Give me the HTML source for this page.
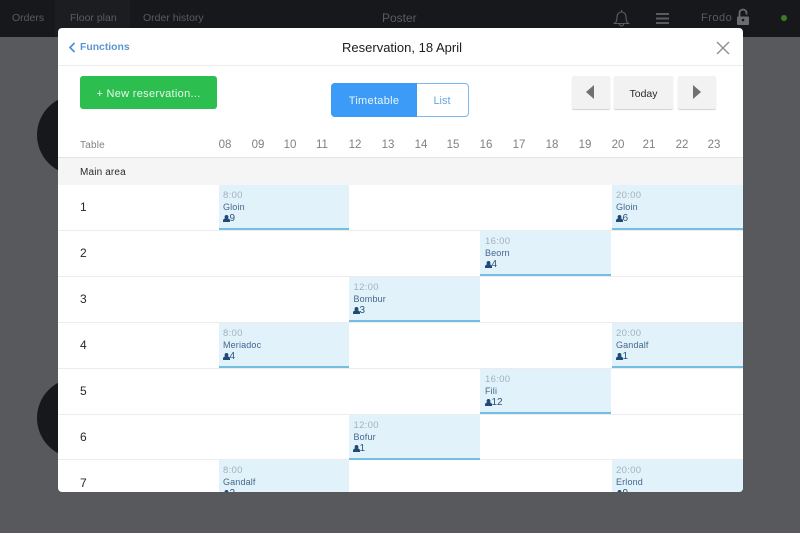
<!DOCTYPE html>
<html><head><meta charset="utf-8"><style>
*{box-sizing:border-box;margin:0;padding:0}
html,body{width:800px;height:533px;overflow:hidden;background:#58595d;font-family:"Liberation Sans",sans-serif}
.a{position:absolute;white-space:nowrap}
.top{left:0;top:0;width:800px;height:37px;background:#17181c}
.tt{color:#5a5b5f;font-size:10.5px;top:12px;line-height:13px}
.c{width:80px;height:80px;border-radius:50%;background:#17181c;left:37px}
.m{left:58px;top:28px;width:685px;height:464px;background:#fff;border-radius:4px;overflow:hidden}
.h{color:#808083;font-size:11.5px;line-height:13px;top:111px;width:30px;text-align:center}
.row{left:0;width:685px;height:1px;background:#ececee}
.n{left:22px;font-size:12px;color:#27282b;line-height:13px}
.e{height:45px;background:#e1f2fa;border-bottom:2px solid #74bde3}
.w1{width:130px}.w2{width:131px}
.e b{position:absolute;left:4px;font-weight:normal;white-space:nowrap}
.e .t{top:5px;color:#a3b1bd;font-size:9.5px;line-height:12px;letter-spacing:.3px}
.e .g{top:17px;color:#44678a;font-size:9px;line-height:11px;letter-spacing:.15px}
.e .p{top:28px;left:10.5px;color:#2c5478;font-size:10px;line-height:12px}
.e svg{position:absolute;left:4px;top:30px}
.btn{top:48px;height:33px;background:#f2f2f2;border-radius:2px;box-shadow:0 1px 1px #d0d0d0}
</style></head><body>
<div class="a top"></div>
<div class="a" style="left:55px;top:0;width:75px;height:37px;background:#1c1d21"></div>
<div class="a tt" style="left:12px">Orders</div>
<div class="a tt" style="left:70px">Floor plan</div>
<div class="a tt" style="left:143px">Order history</div>
<div class="a tt" style="left:382px;font-size:12px;top:12px">Poster</div>
<svg class="a" style="left:613px;top:9px" width="17" height="18" viewBox="0 0 17 18" fill="none" stroke="#5a5b5f" stroke-width="1.1"><path d="M1.500 14.500c2-1.500 2.500-3 2.500-6.500 0-3 2-5 4.500-5s4.500 2 4.500 5c0 3.500.5 5 2.500 6.500z"/><path d="M8.500 3V1M6.500 15c0 2.500 4 2.500 4 0"/></svg>
<svg class="a" style="left:656px;top:13px" width="13" height="11" fill="#5a5b5f"><rect y="0" width="13" height="2"/><rect y="4.500" width="13" height="2"/><rect y="9" width="13" height="2"/></svg>
<div class="a tt" style="left:701px;font-size:11px;top:12px;letter-spacing:.5px">Frodo</div>
<svg class="a" style="left:736px;top:8px" width="14" height="18"><path d="M3.500 9V5a3.500 3.500 0 0 1 7 0v1.500" fill="none" stroke="#6a6b6e" stroke-width="1.800"/><rect x="1" y="8.500" width="12" height="8.500" rx="1" fill="#6a6b6e"/><circle cx="7" cy="12" r="1.300" fill="#17181c"/></svg>
<div class="a" style="left:781px;top:15px;width:6px;height:6px;border-radius:50%;background:#3c7d22"></div>
<div class="a c" style="top:95px"></div>
<div class="a c" style="top:378px"></div>
<div class="a m">
<svg class="a" style="left:10px;top:14px" width="8" height="11" fill="none" stroke="#4a90d9" stroke-width="1.700"><path d="M6.500 1L2 5.500 6.500 10"/></svg>
<div class="a" style="left:22px;top:13px;font-size:10.400px;font-weight:bold;color:#5b95d3;line-height:13px">Functions</div>
<div class="a" style="left:0;width:688px;top:12px;text-align:center;font-size:13px;line-height:15px;color:#1d1d20">Reservation, 18 April</div>
<svg class="a" style="left:658px;top:13px" width="14" height="14" fill="none" stroke="#8e8e90" stroke-width="1.300"><path d="M1 1L13 13M13 1L1 13"/></svg>
<div class="a" style="left:0;top:37px;width:685px;height:1px;background:#ececee"></div>
<div class="a" style="left:22px;top:48px;width:137px;height:33px;background:#2cbf50;border-radius:3px;color:#e6f7ea;font-size:11px;line-height:36px;text-align:center;letter-spacing:.3px">+ New reservation...</div>
<div class="a" style="left:273px;top:55px;width:138px;height:34px;border:1px solid #7db8ee;border-radius:4px"></div>
<div class="a" style="left:273px;top:55px;width:86px;height:34px;background:#3c9bf6;border-radius:4px 0 0 4px;color:#eaf4fe;font-size:11px;line-height:36px;text-align:center;letter-spacing:.3px">Timetable</div>
<div class="a" style="left:359px;top:55px;width:50px;height:34px;color:#64a8e8;font-size:11px;line-height:36px;text-align:center">List</div>
<div class="a btn" style="left:514px;width:38px"></div>
<div class="a btn" style="left:556px;width:59px;color:#2a2a2c;font-size:10.500px;line-height:36px;text-align:center">Today</div>
<div class="a btn" style="left:620px;width:38px"></div>
<svg class="a" style="left:528px;top:57px" width="9" height="14" fill="#707072"><path d="M8 0v14L0 7z"/></svg>
<svg class="a" style="left:635px;top:57px" width="9" height="14" fill="#707072"><path d="M0 0v14l8-7z"/></svg>
<div class="a" style="left:22px;top:111px;font-size:10px;line-height:13px;color:#808083;letter-spacing:.2px">Table</div>
<div class="a h" style="left:152px">08</div><div class="a h" style="left:185px">09</div><div class="a h" style="left:217px">10</div><div class="a h" style="left:249px">11</div><div class="a h" style="left:282px">12</div><div class="a h" style="left:315px">13</div><div class="a h" style="left:348px">14</div><div class="a h" style="left:380px">15</div><div class="a h" style="left:413px">16</div><div class="a h" style="left:446px">17</div><div class="a h" style="left:479px">18</div><div class="a h" style="left:512px">19</div><div class="a h" style="left:545px">20</div><div class="a h" style="left:576px">21</div><div class="a h" style="left:609px">22</div><div class="a h" style="left:641px">23</div>
<div class="a" style="left:0;top:129px;width:685px;height:28px;background:#f5f5f5;border-top:1px solid #e4e4e6"></div>
<div class="a" style="left:22px;top:138px;font-size:10px;line-height:13px;color:#2a2a2c;letter-spacing:.15px">Main area</div>
<div class="a row" style="top:202px"></div><div class="a row" style="top:248px"></div><div class="a row" style="top:294px"></div><div class="a row" style="top:340px"></div><div class="a row" style="top:386px"></div><div class="a row" style="top:431px"></div>
<div class="a n" style="top:173px">1</div><div class="a n" style="top:219px">2</div><div class="a n" style="top:265px">3</div><div class="a n" style="top:311px">4</div><div class="a n" style="top:357px">5</div><div class="a n" style="top:403px">6</div><div class="a n" style="top:449px">7</div>

<div class="a e w1" style="left:161px;top:157px"><b class="t">8:00</b><b class="g">Gloin</b><svg width="7" height="7" fill="#1f4a73"><circle cx="3.500" cy="1.900" r="1.900"/><path d="M0 7V6c0-2.500 2-2.700 3.500-2.700S7 3.500 7 6v1z"/></svg><b class="p">9</b></div>
<div class="a e w2" style="left:554px;top:157px"><b class="t">20:00</b><b class="g">Gloin</b><svg width="7" height="7" fill="#1f4a73"><circle cx="3.500" cy="1.900" r="1.900"/><path d="M0 7V6c0-2.500 2-2.700 3.500-2.700S7 3.500 7 6v1z"/></svg><b class="p">6</b></div>
<div class="a e w2" style="left:422px;top:203px"><b class="t" style="left:5px">16:00</b><b class="g" style="left:5px">Beorn</b><svg width="7" height="7" fill="#1f4a73" style="left:5px"><circle cx="3.500" cy="1.900" r="1.900"/><path d="M0 7V6c0-2.500 2-2.700 3.500-2.700S7 3.500 7 6v1z"/></svg><b class="p" style="left:11.500px">4</b></div>
<div class="a e w2" style="left:291px;top:249px"><b class="t" style="left:4.500px">12:00</b><b class="g" style="left:4.500px">Bombur</b><svg width="7" height="7" fill="#1f4a73"><circle cx="3.500" cy="1.900" r="1.900"/><path d="M0 7V6c0-2.500 2-2.700 3.500-2.700S7 3.500 7 6v1z"/></svg><b class="p">3</b></div>
<div class="a e w1" style="left:161px;top:295px"><b class="t">8:00</b><b class="g">Meriadoc</b><svg width="7" height="7" fill="#1f4a73"><circle cx="3.500" cy="1.900" r="1.900"/><path d="M0 7V6c0-2.500 2-2.700 3.500-2.700S7 3.500 7 6v1z"/></svg><b class="p">4</b></div>
<div class="a e w2" style="left:554px;top:295px"><b class="t">20:00</b><b class="g">Gandalf</b><svg width="7" height="7" fill="#1f4a73"><circle cx="3.500" cy="1.900" r="1.900"/><path d="M0 7V6c0-2.500 2-2.700 3.500-2.700S7 3.500 7 6v1z"/></svg><b class="p">1</b></div>
<div class="a e w2" style="left:422px;top:341px"><b class="t" style="left:5px">16:00</b><b class="g" style="left:5px">Fili</b><svg width="7" height="7" fill="#1f4a73" style="left:5px"><circle cx="3.500" cy="1.900" r="1.900"/><path d="M0 7V6c0-2.500 2-2.700 3.500-2.700S7 3.500 7 6v1z"/></svg><b class="p" style="left:11.500px">12</b></div>
<div class="a e w2" style="left:291px;top:387px"><b class="t" style="left:4.500px">12:00</b><b class="g" style="left:4.500px">Bofur</b><svg width="7" height="7" fill="#1f4a73"><circle cx="3.500" cy="1.900" r="1.900"/><path d="M0 7V6c0-2.500 2-2.700 3.500-2.700S7 3.500 7 6v1z"/></svg><b class="p">1</b></div>
<div class="a e w1" style="left:161px;top:432px"><b class="t">8:00</b><b class="g">Gandalf</b><svg width="7" height="7" fill="#1f4a73"><circle cx="3.500" cy="1.900" r="1.900"/><path d="M0 7V6c0-2.500 2-2.700 3.500-2.700S7 3.500 7 6v1z"/></svg><b class="p">2</b></div>
<div class="a e w2" style="left:554px;top:432px"><b class="t">20:00</b><b class="g">Erlond</b><svg width="7" height="7" fill="#1f4a73"><circle cx="3.500" cy="1.900" r="1.900"/><path d="M0 7V6c0-2.500 2-2.700 3.500-2.700S7 3.500 7 6v1z"/></svg><b class="p">9</b></div>
</div>
</body></html>
